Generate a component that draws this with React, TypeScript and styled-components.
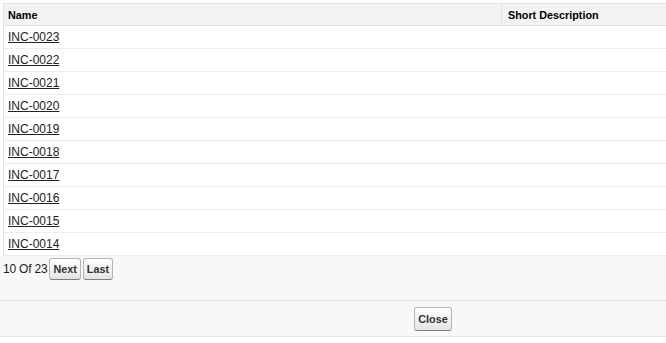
import styled, { createGlobalStyle } from 'styled-components';

const GlobalStyle = createGlobalStyle`
  html, body {
    margin: 0;
    padding: 0;
    background: #fff;
    overflow: hidden;
  }
  body {
    font-family: Arial, "Liberation Sans", sans-serif;
    font-size: 12px;
    color: #222;
  }
`;

const records = [
  'INC-0023',
  'INC-0022',
  'INC-0021',
  'INC-0020',
  'INC-0019',
  'INC-0018',
  'INC-0017',
  'INC-0016',
  'INC-0015',
  'INC-0014',
];

const Dialog = styled.div`
  padding-top: 3px;
`;

const Table = styled.div`
  margin-left: 3px;
  border-left: 1px solid #e0e3e5;
  border-top: 1px solid #e0e3e5;
`;

const HeaderRow = styled.div`
  display: grid;
  grid-template-columns: 498px 1fr;
  height: 21px;
  background: #f2f3f3;
  border-bottom: 1px solid #e0e3e5;
`;

const HeaderCell = styled.div<{ $first?: boolean }>`
  display: flex;
  align-items: center;
  padding-left: ${({ $first }) => ($first ? '4px' : '6px')};
  font-size: 10.8px;
  font-weight: bold;
  color: #000;
  border-right: ${({ $first }) => ($first ? '1px solid #e0e3e5' : 'none')};
  white-space: nowrap;
`;

const Row = styled.div`
  display: grid;
  grid-template-columns: 498px 1fr;
  height: 22px;
  border-bottom: 1px solid #ededed;
  background: #fff;
`;

const Cell = styled.div`
  display: flex;
  align-items: center;
  padding-left: 4px;
`;

const RecordLink = styled.a`
  color: #222;
  text-decoration: underline;
  font-size: 12px;
  cursor: pointer;
`;

const Pagination = styled.div`
  display: flex;
  align-items: flex-start;
  gap: 2px;
  height: 44px;
  box-sizing: border-box;
  padding: 2px 3px 0;
  background: #f8f8f8;
`;

const PageInfo = styled.span`
  font-size: 12px;
  color: #222;
  line-height: 22px;
  letter-spacing: -0.2px;
`;

const Button = styled.button<{ $tall?: boolean }>`
  font-family: Arial, "Liberation Sans", sans-serif;
  font-size: 10.8px;
  font-weight: bold;
  color: #333;
  height: ${({ $tall }) => ($tall ? '24px' : '22px')};
  padding: 0 3px;
  border: 1px solid #b5b5b5;
  border-bottom-color: #7f7f7f;
  border-radius: 3px;
  background: linear-gradient(#ffffff, #f0f0f0 60%, #e3e3e3);
  cursor: pointer;
`;

const Footer = styled.div`
  display: flex;
  justify-content: center;
  align-items: center;
  height: 35px;
  padding-left: 200px;
  background: #f8f8f8;
  border-top: 1px solid #dddddd;
  border-bottom: 1px solid #e3e3e3;
`;

export default function App() {
  return (
    <>
      <GlobalStyle />
      <Dialog>
        <Table>
          <HeaderRow>
            <HeaderCell $first>Name</HeaderCell>
            <HeaderCell>Short Description</HeaderCell>
          </HeaderRow>
          {records.map((name) => (
            <Row key={name}>
              <Cell>
                <RecordLink>{name}</RecordLink>
              </Cell>
              <Cell />
            </Row>
          ))}
        </Table>
        <Pagination>
          <PageInfo>10 Of 23</PageInfo>
          <Button>Next</Button>
          <Button>Last</Button>
        </Pagination>
        <Footer>
          <Button $tall>Close</Button>
        </Footer>
      </Dialog>
    </>
  );
}
